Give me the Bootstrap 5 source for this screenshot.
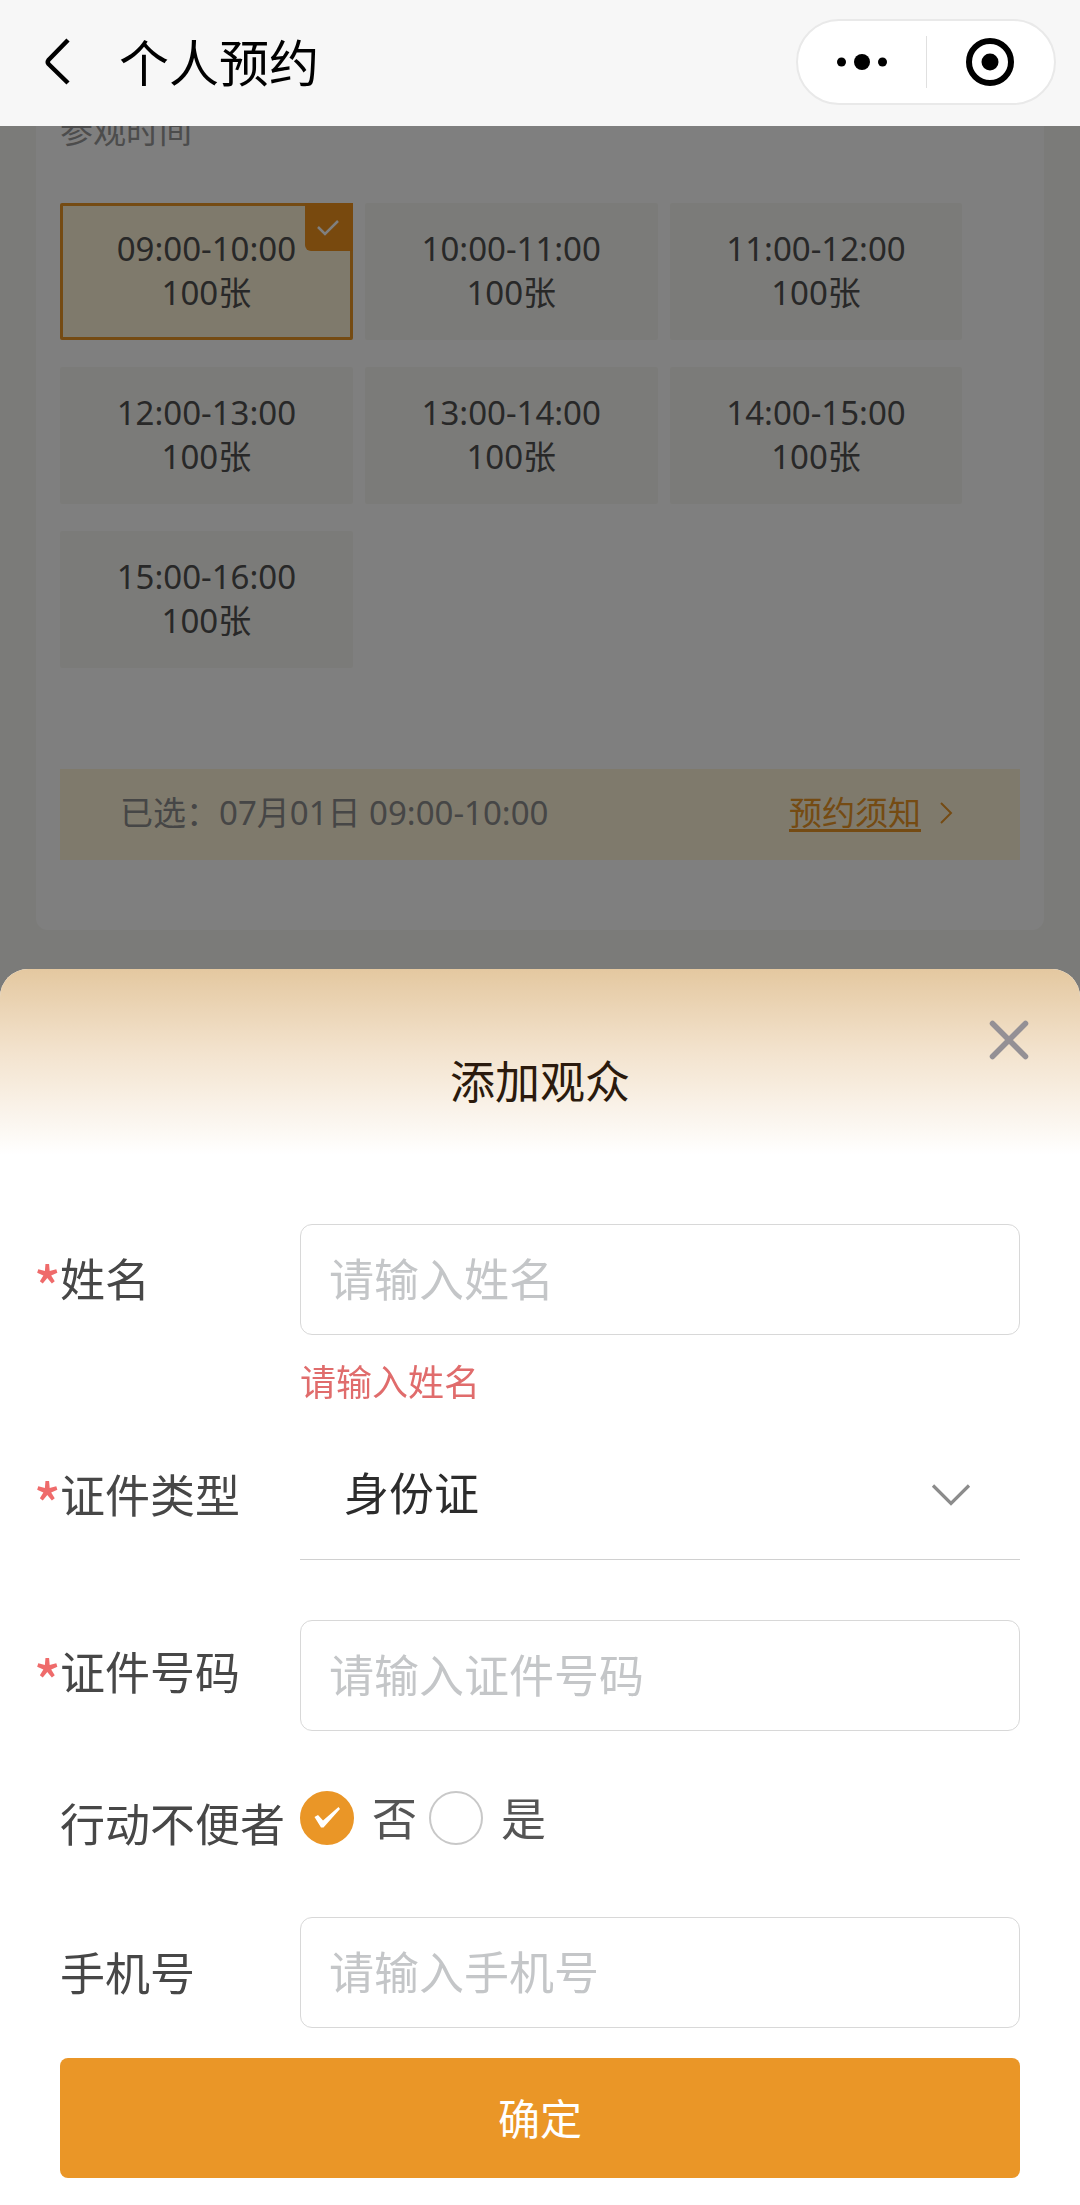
<!DOCTYPE html>
<html lang="zh-CN">
<head>
<meta charset="utf-8">
<meta name="viewport" content="width=device-width, initial-scale=1">
<title>个人预约</title>
<link href="https://cdn.jsdelivr.net/npm/bootstrap@5.3.0/dist/css/bootstrap.min.css" rel="stylesheet">
<style>
:root{--brand:#ea9627;--ink:#474747}
body{background:#f7f7f3;font-family:"Noto Sans CJK SC","Noto Sans",sans-serif;color:var(--ink);min-height:100vh}
/* top bar */
.topbar{height:126px;background:#f7f7f7;padding:0 24px 2px 40px;z-index:1050}
.topbar h1{font-size:50px;line-height:60px;font-weight:400;color:#000;padding-bottom:4px}
.back-btn{width:32px;margin-right:47px}
.capsule{width:260px;height:86px;border:2px solid #e9e9e9;border-radius:43px;background:#fff}
.capsule .btn{border:0;flex:1 1 0;line-height:1}
.capsule svg{display:block;margin:0 auto}
.capsule-line{width:1px;height:52px;background:#e0e0e0}
/* booking page under the sheet */
.booking{margin:0 36px;padding:107px 24px 70px;background:#fff;border-radius:0 0 12px 12px}
.booking,.booking .btn{font-family:"Noto Sans","Noto Sans CJK SC",sans-serif;font-size:33px}
.booking h2{font-size:33px;line-height:48px;font-weight:400;color:#999;margin-bottom:48px}
.slots{gap:27px 12px;margin-bottom:101px}
.booking .slot{flex:0 0 auto;width:30.5%;height:137px;padding:0 0 2px;border:3px solid #f7f7f2;border-radius:2px;background:#f7f7f2;line-height:44px;color:#505050}
.booking .slot.chosen{background:#fff4d8;border-color:var(--brand)}
.tick{width:48px;height:48px;top:-3px;right:-3px;background:#f0921c;border-bottom-left-radius:6px}
.picked{height:91px;padding:0 63px 3px 60px;background:#fff5d9;color:#8c8c8c}
.picked a{color:var(--brand);text-underline-offset:4px;text-decoration-thickness:3px}
.shade{inset:0;background:rgba(0,0,0,.5);z-index:1030}
/* bottom sheet */
.sheet{z-index:1040;background:#fff;border-radius:28px 28px 0 0;overflow:hidden;padding-bottom:27px}
.sheet-head{height:186px;padding-top:83px;background:linear-gradient(#e4c8a0,#f3e3ce 45%,#fff)}
.sheet-head h2{font-size:45px;line-height:56px;font-weight:400;color:#2b1a0d}
.close-btn{top:46px;right:46px;width:50px;height:50px}
.sheet form{padding:69px 60px 0}
.field{display:flex;align-items:center;margin-bottom:60px}
.field.invalid{align-items:flex-start;margin-bottom:30px}
.field-name{flex:none;width:240px;font-size:45px;line-height:64px;white-space:nowrap;padding:0 0 2px}
.field.invalid .field-name{line-height:107px}
.need{display:flex}
.need::before{content:"*";flex:none;color:#ef6b6b;font-family:"Noto Sans CJK SC",sans-serif;font-size:55px;font-weight:500;width:26px;margin-left:-26px;padding-top:7px}
.field .form-control{height:111px;padding:0 28px 4px;font-size:45px;color:#333;border:1px solid #d8d8d8;border-radius:12px}
.field .form-control::placeholder{color:#c4c6c8}
.field .invalid-feedback{font-size:36px;line-height:48px;margin-top:21px;margin-bottom:2px;color:#e06c6c}
.field .form-select{height:124px;padding:0 60px 12px 44px;font-size:45px;line-height:60px;color:#2c2c2c;border:0;border-bottom:1px solid #d0d0d0;border-radius:0;background:#fff url("data:image/svg+xml,%3Csvg xmlns='http://www.w3.org/2000/svg' viewBox='0 0 40 24'%3E%3Cpath d='M2 2.500 20 20.500 38 2.500' fill='none' stroke='%238c8c8c' stroke-width='3.200'/%3E%3C/svg%3E") no-repeat right 49px top 47px/40px 24px}
.field .form-check-input{float:none;flex:none;width:54px;height:54px;margin:0 18px 0 0;border:2px solid #c8c8c8}
.field .form-check-input:checked{border-color:var(--brand);background:var(--brand) url("data:image/svg+xml,%3Csvg xmlns='http://www.w3.org/2000/svg' viewBox='0 0 54 54'%3E%3Cpath d='M14.500 26 L18 24 L23 29.500 L38.500 16 L40 18 L23.500 36.500 L21 36.500Z' fill='%23fff'/%3E%3C/svg%3E") center/54px 54px no-repeat;background-origin:border-box}
.choice{font-size:45px;line-height:52px;color:#555;margin-right:12px}
.submit-btn{height:120px;padding:0 0 4px;font-size:42px;border:0;border-radius:8px;background:var(--brand);color:#fff}
.last-field{margin-bottom:30px}
</style>
</head>
<body>
<header class="topbar fixed-top d-flex align-items-center">
  <button type="button" class="btn p-0 border-0 back-btn" aria-label="返回">
    <svg class="d-block" width="32" height="50" viewBox="0 0 32 50" fill="none" stroke="#000" stroke-width="4.500" stroke-linejoin="round"><path d="M28 3 8.500 23Q7 25 8.500 27L28 46"/></svg>
  </button>
  <h1 class="m-0 me-auto">个人预约</h1>
  <div class="capsule d-flex align-items-center">
    <button type="button" class="btn p-0" aria-label="更多">
      <svg width="52" height="20" viewBox="0 0 52 20"><circle cx="5.500" cy="10" r="4.500"/><circle cx="26" cy="10" r="8"/><circle cx="46.500" cy="10" r="4.500"/></svg>
    </button>
    <span class="capsule-line"></span>
    <button type="button" class="btn p-0" aria-label="关闭小程序">
      <svg width="50" height="50" viewBox="0 0 50 50"><circle cx="25" cy="25" r="21" fill="none" stroke="#000" stroke-width="6"/><circle cx="25" cy="25" r="8.500"/></svg>
    </button>
  </div>
</header>

<main class="booking">
  <h2>参观时间</h2>
  <div class="slots d-flex flex-wrap">
    <button type="button" class="btn slot chosen position-relative" aria-pressed="true">09:00-10:00<br>100张
      <span class="tick position-absolute"><svg class="d-block" width="48" height="48" viewBox="0 0 48 48" fill="none" stroke="#fff" stroke-width="2.500"><path d="M13 24 20 31 33 18"/></svg></span>
    </button>
    <button type="button" class="btn slot">10:00-11:00<br>100张</button>
    <button type="button" class="btn slot">11:00-12:00<br>100张</button>
    <button type="button" class="btn slot">12:00-13:00<br>100张</button>
    <button type="button" class="btn slot">13:00-14:00<br>100张</button>
    <button type="button" class="btn slot">14:00-15:00<br>100张</button>
    <button type="button" class="btn slot">15:00-16:00<br>100张</button>
  </div>
  <div class="picked d-flex align-items-center">
    <span class="me-auto">已选：07月01日 09:00-10:00</span>
    <a href="#notice">预约须知</a>
    <svg class="ms-3" width="20" height="24" viewBox="0 0 20 24" fill="none" stroke="#ea9627" stroke-width="2"><path d="M4 2 14 12 4 22"/></svg>
  </div>
</main>
<div class="shade position-fixed"></div>

<section class="sheet fixed-bottom" role="dialog" aria-labelledby="sheetTitle">
  <div class="sheet-head position-relative text-center">
    <h2 id="sheetTitle" class="m-0">添加观众</h2>
    <button type="button" class="btn p-0 border-0 close-btn position-absolute" aria-label="关闭">
      <svg class="d-block" width="50" height="50" viewBox="0 0 50 50" stroke="#949095" stroke-width="5.500" stroke-linecap="round"><path d="M8.500 8.500 41.500 41.500M41.500 8.500 8.500 41.500"/></svg>
    </button>
  </div>
  <form>
    <div class="field invalid">
      <label class="field-name need" for="visitorName">姓名</label>
      <div class="flex-fill">
        <input id="visitorName" type="text" class="form-control" placeholder="请输入姓名" aria-describedby="nameError">
        <div id="nameError" class="invalid-feedback d-block">请输入姓名</div>
      </div>
    </div>
    <div class="field">
      <label class="field-name need" for="idType">证件类型</label>
      <select id="idType" class="form-select"><option>身份证</option></select>
    </div>
    <div class="field">
      <label class="field-name need" for="idNumber">证件号码</label>
      <input id="idNumber" type="text" class="form-control" placeholder="请输入证件号码">
    </div>
    <div class="field" role="radiogroup" aria-labelledby="mobilityName">
      <span id="mobilityName" class="field-name">行动不便者</span>
      <div class="d-flex align-self-start">
        <input class="form-check-input" type="radio" name="mobility" id="mobilityNo" checked>
        <label class="choice" for="mobilityNo">否</label>
        <input class="form-check-input" type="radio" name="mobility" id="mobilityYes">
        <label class="choice" for="mobilityYes">是</label>
      </div>
    </div>
    <div class="field last-field">
      <label class="field-name" for="phone">手机号</label>
      <input id="phone" type="tel" class="form-control" placeholder="请输入手机号">
    </div>
    <button type="submit" class="btn submit-btn w-100">确定</button>
  </form>
</section>
<script src="https://cdn.jsdelivr.net/npm/bootstrap@5.3.0/dist/js/bootstrap.bundle.min.js"></script>
</body>
</html>
